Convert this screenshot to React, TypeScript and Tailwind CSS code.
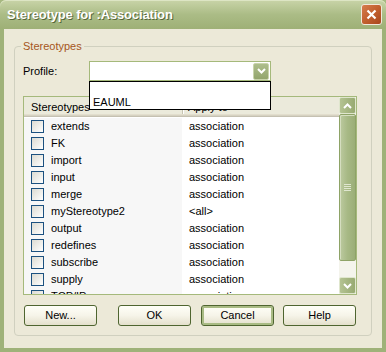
import { useState } from 'react';

interface StereotypeRow {
  name: string;
  applyTo: string;
}

const rows: StereotypeRow[] = [
  { name: 'extends', applyTo: 'association' },
  { name: 'FK', applyTo: 'association' },
  { name: 'import', applyTo: 'association' },
  { name: 'input', applyTo: 'association' },
  { name: 'merge', applyTo: 'association' },
  { name: 'myStereotype2', applyTo: '<all>' },
  { name: 'output', applyTo: 'association' },
  { name: 'redefines', applyTo: 'association' },
  { name: 'subscribe', applyTo: 'association' },
  { name: 'supply', applyTo: 'association' },
  { name: 'TCP/IP', applyTo: 'association' },
];

function Chevron({ up = false }: { up?: boolean }) {
  return (
    <svg width="9" height="6" viewBox="0 0 9 6">
      <path
        d={up ? 'M1 5 L4.5 1.5 L8 5' : 'M1 1 L4.5 4.5 L8 1'}
        fill="none"
        stroke="#fff"
        strokeWidth="2"
      />
    </svg>
  );
}

function XpButton({ label, isDefault = false, className = '' }: { label: string; isDefault?: boolean; className?: string }) {
  return (
    <button
      className={`w-[73px] h-[21px] rounded-[3px] border border-[#4f6530] bg-linear-to-b from-[#fffff8] via-[#f6f4e9] to-[#e4e0cc] text-black leading-none ${
        isDefault ? 'shadow-[inset_0_0_0_2px_#a9bb84]' : ''
      } ${className}`}
    >
      {label}
    </button>
  );
}

export default function App() {
  const [checked, setChecked] = useState<Record<string, boolean>>({});

  return (
    <div className="w-[386px] h-[352px] flex flex-col font-['Liberation_Sans',Arial,sans-serif] text-[11px] text-black bg-[#a6b880]">
      {/* Title bar */}
      <div className="h-[29px] shrink-0 rounded-t-[6px] flex items-center pl-[7px] pr-[4px] bg-linear-to-b from-[#c9d4a8] via-[#abbc86] to-[#9eb076] shadow-[inset_0_1px_0_#dde5c4]">
        <span className="flex-1 text-white font-bold text-[13px] tracking-[-0.15px] [text-shadow:1px_1px_0_#56663a]">
          Stereotype for :Association
        </span>
        <button className="size-[21px] rounded-[3px] border border-[#f1e8dc] bg-linear-to-br from-[#d67c4c] via-[#c2602f] to-[#a9461c] flex items-center justify-center">
          <svg width="11" height="11" viewBox="0 0 11 11">
            <path d="M1.5 1.5 L9.5 9.5 M9.5 1.5 L1.5 9.5" stroke="#fff" strokeWidth="2.2" />
          </svg>
        </button>
      </div>

      {/* Body */}
      <div className="flex-1 flex flex-col border-x-4 border-b-4 border-[#9fb279] bg-[#ece9d8]">
        <fieldset className="mt-[11px] mx-[10px] border border-[#d0d0bf] rounded-[4px] pl-[8px] pr-[14px] pb-[9px]">
          <legend className="ml-[-2px] px-[2px] leading-[13px] text-[#a5561c]">Stereotypes</legend>

          {/* Profile row */}
          <div className="mt-[8px] flex items-center h-[20px]">
            <span className="w-[66px]">Profile:</span>
            <div className="relative w-[182px] h-[20px]">
              <div className="h-full border border-[#a5b97b] bg-white flex items-center justify-end pr-[1px]">
                <div className="w-[16px] h-[17px] rounded-[2px] border border-[#c9d4ac] bg-linear-to-b from-[#aebe8c] to-[#93a56d] flex items-center justify-center">
                  <Chevron />
                </div>
              </div>
              {/* open dropdown list */}
              <div className="absolute left-0 top-full w-full h-[29px] border border-black bg-white z-10 flex flex-col">
                <div className="h-[14px]" />
                <div className="h-[13px] px-[3px] flex items-center">EAUML</div>
              </div>
            </div>
          </div>

          {/* List view */}
          <div className="mt-[15px] h-[199px] border border-[#a5b97b] bg-white flex">
            <div className="flex-1 flex flex-col overflow-hidden">
              <div className="h-[20px] shrink-0 flex bg-[#ebeadb] shadow-[inset_0_-1px_0_#c5c1b1,inset_0_-2px_0_#d6d2c2,inset_0_-3px_0_#e2decd]">
                <div className="w-[158px] flex items-center pl-[7px] pr-[5px]">
                  <span className="flex-1">Stereotypes</span>
                  <svg width="9" height="5" viewBox="0 0 9 5">
                    <path d="M0.5 4.5 L4.5 0.5 L8.5 4.5 Z" fill="#fff" stroke="#aca899" strokeWidth="1" />
                  </svg>
                </div>
                <div className="w-[2px] h-[14px] self-center border-l border-[#c7c5b2] border-r border-r-white" />
                <div className="flex-1 flex items-center pl-[4px]">Apply to</div>
              </div>
              <div className="flex-1 flex flex-col pt-[1px] overflow-hidden">
                {rows.map((row) => (
                  <div key={row.name} className="h-[17px] shrink-0 flex">
                    <div className="w-[158px] bg-[#f7f7f7] flex items-center pl-[7px] gap-[7px]">
                      <span
                        onClick={() => setChecked((prev) => ({ ...prev, [row.name]: !prev[row.name] }))}
                        className="size-[13px] border border-[#1c5180] bg-linear-to-br from-[#dcdbd2] to-white flex items-center justify-center"
                      >
                        {checked[row.name] && (
                          <svg width="7" height="7" viewBox="0 0 7 7">
                            <path d="M0.5 3.5 L2.5 5.5 L6.5 1" fill="none" stroke="#21a121" strokeWidth="1.6" />
                          </svg>
                        )}
                      </span>
                      <span>{row.name}</span>
                    </div>
                    <div className="flex-1 flex items-center pl-[7px]">{row.applyTo}</div>
                  </div>
                ))}
              </div>
            </div>

            {/* Scrollbar */}
            <div className="w-[17px] flex flex-col bg-[#f4f4ec]">
              <div className="h-[17px] shrink-0 rounded-[2px] border border-[#dfe6cd] bg-linear-to-r from-[#b4c392] to-[#98aa72] flex items-center justify-center">
                <Chevron up />
              </div>
              <div className="h-[147px] shrink-0 rounded-[2px] border border-[#8ea367] bg-linear-to-r from-[#bccaa0] via-[#a7b985] to-[#9bae77] flex flex-col items-center justify-center gap-[1px] shadow-[inset_1px_1px_0_#d5dec0]">
                <div className="w-[7px] h-px bg-[#dfe6cf]" />
                <div className="w-[7px] h-px bg-[#dfe6cf]" />
                <div className="w-[7px] h-px bg-[#dfe6cf]" />
                <div className="w-[7px] h-px bg-[#dfe6cf]" />
              </div>
              <div className="flex-1" />
              <div className="h-[17px] shrink-0 rounded-[2px] border border-[#dfe6cd] bg-linear-to-r from-[#b4c392] to-[#98aa72] flex items-center justify-center">
                <Chevron />
              </div>
            </div>
          </div>

          {/* Buttons */}
          <div className="mt-[10px] flex h-[21px] pl-[1px]">
            <XpButton label="New..." />
            <XpButton label="OK" className="ml-[21px]" />
            <XpButton label="Cancel" isDefault className="ml-[10px]" />
            <XpButton label="Help" className="ml-[9px]" />
          </div>
        </fieldset>
      </div>
    </div>
  );
}
